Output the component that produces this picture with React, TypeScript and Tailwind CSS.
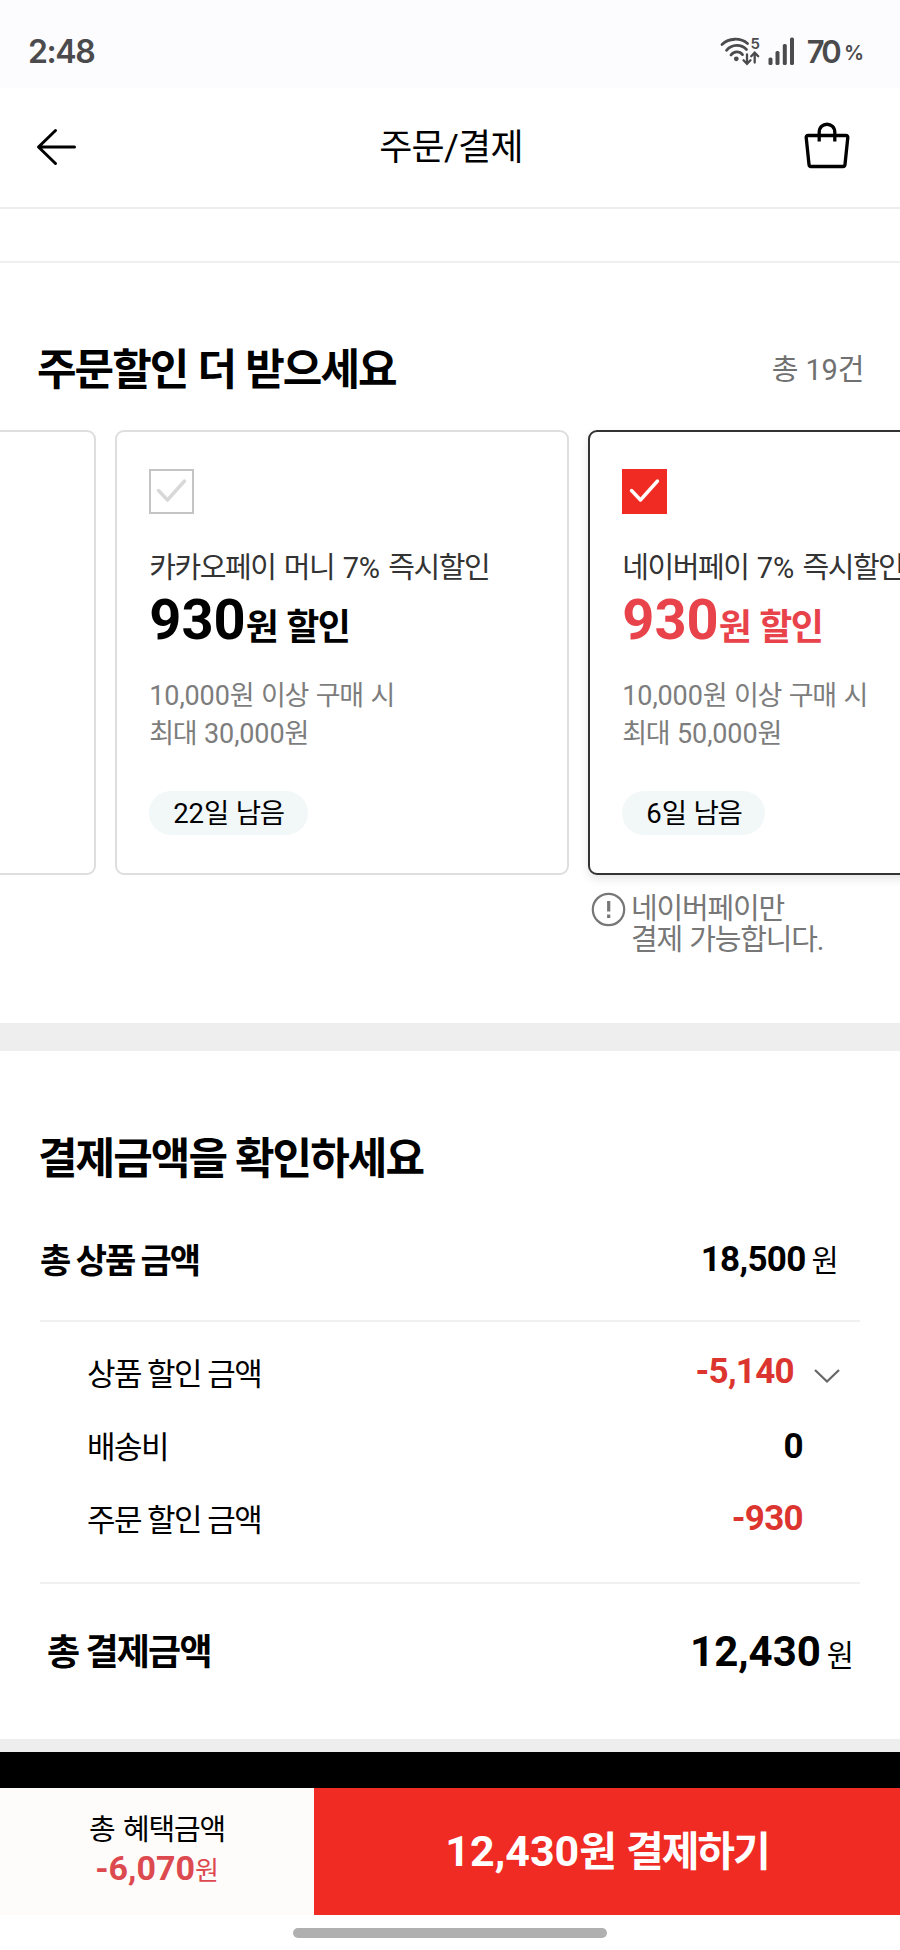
import clsx from 'clsx';

const coupons = [
  {
    name: '카카오페이 머니 7% 즉시할인',
    price: '930',
    limit: '최대 30,000원',
    left: '22일 남음',
    checked: false,
  },
  {
    name: '네이버페이 7% 즉시할인',
    price: '930',
    limit: '최대 50,000원',
    left: '6일 남음',
    checked: true,
  },
];

// hangul is set tight, digits keep their normal spacing
const Ko = ({ children }: { children: string }) => (
  <>
    {children.split(/([0-9,%]+)/).map((part, i) =>
      i % 2 ? (
        <span key={i} className="tracking-[-0.005em]">
          {part}
        </span>
      ) : (
        <span key={i} className="tracking-[-0.05em] [word-spacing:0.09em]">
          {part}
        </span>
      )
    )}
  </>
);

const StatusBar = () => (
  <div className="flex h-[88px] items-center justify-between bg-[#fcfcff] pt-[14px] pr-[36px] pl-[28px] font-['Inter',sans-serif] text-[#4b4b4d]">
    <span className="mt-px text-[32px] leading-none font-semibold tracking-[-0.045em]">2:48</span>
    <div className="flex items-center">
      <svg className="overflow-visible" width="40" height="30" viewBox="0 0 40 30" fill="none" stroke="#4b4b4d" strokeWidth="2.8" strokeLinecap="round">
        <path d="M2 8.5C9 1.8 20.5 1.5 27.5 7.5" />
        <path d="M6.5 14.3C12 8 21 8 26.500 13.500" />
        <path d="M11 19C14 15 19.500 15 22.500 18.600" />
        <circle cx="16.300" cy="22.800" r="2.400" fill="#4b4b4d" stroke="none" />
        <path d="M27 18.500V27M23.500 24.300L27 27.800L30.500 24.300M34.700 26.500V17M31.200 20.200L34.700 16.700L38.200 20.200" strokeWidth="2.300" />
        <text x="30.500" y="13" fontSize="15" fontWeight="600" fill="#4b4b4d" stroke="none">5</text>
      </svg>
      <svg className="ml-2" width="26" height="30" viewBox="0 0 26 30" fill="#4b4b4d">
        <rect x="0.500" y="21.500" width="4" height="7.500" rx="1.600" />
        <rect x="7.500" y="15" width="4" height="14" rx="1.600" />
        <rect x="14.800" y="8" width="4" height="21" rx="1.600" />
        <rect x="22" y="1.500" width="4" height="27.500" rx="1.600" />
      </svg>
      <span className="ml-[13px] flex items-baseline">
        <span className="text-[31px] leading-none font-semibold tracking-[-0.09em]">70</span>
        <span className="relative -top-[3px] ml-[5px] text-[20px] leading-none font-semibold">%</span>
      </span>
    </div>
  </div>
);

const Header = () => (
  <header className="flex h-[121px] items-center justify-between border-b-2 border-[#eeeeee] pr-[50px] pl-[36px]">
    <svg className="-mt-px" width="42" height="40" viewBox="0 0 42 40" fill="none" stroke="#000" strokeWidth="3" strokeLinecap="round" strokeLinejoin="round">
      <path d="M38.500 20H3M19.500 3.500L2.500 20L19.500 36.500" />
    </svg>
    <h1 className="mt-px ml-[20px] text-[36px] leading-none tracking-[-0.02em]">주문/결제</h1>
    <svg className="-mt-[3px]" width="46" height="48" viewBox="0 0 46 48" fill="none" stroke="#000" strokeWidth="3.300" strokeLinejoin="round">
      <path d="M4 13.500H42Q44 13.500 43.800 15.500L41 42.500Q40.800 44.500 39 44.500H7Q5.200 44.500 5 42.500L2.200 15.500Q2 13.500 4 13.500Z" />
      <path d="M15.200 19.500V10.500C15.200 -0.500 30.800 -0.500 30.800 10.500V19.500" />
    </svg>
  </header>
);

const CheckBox = ({ checked }: { checked: boolean }) => (
  <div
    className={clsx(
      'h-[45px] w-[45px]',
      checked ? 'bg-[#ef2b24] text-white' : 'border-2 border-[#c4c4c4] text-[#d8d8d8]'
    )}
  >
    <svg className={checked ? '' : '-m-[2px]'} width="45" height="45" viewBox="0 0 45 45" fill="none" stroke="currentColor" strokeWidth="3.400" strokeLinecap="round" strokeLinejoin="round">
      <path d="M9.500 21.500L18.500 31L35.500 12" />
    </svg>
  </div>
);

const CouponCard = ({ coupon }: { coupon: (typeof coupons)[number] }) => (
  <div
    className={clsx(
      'h-[445px] w-[454px] shrink-0 rounded-[9px] border-2 pt-[37px] pl-[32.300px] whitespace-nowrap',
      coupon.checked
        ? 'border-[#333333] shadow-[0_4px_10px_rgba(0,0,0,0.1)]'
        : 'border-[#dedede]'
    )}
  >
    <CheckBox checked={coupon.checked} />
    <p className="mt-[34px] text-[29px] leading-[40px] text-[#333333]">
      <Ko>{coupon.name}</Ko>
    </p>
    <p className={clsx('text-[56px] leading-[64px] font-bold', coupon.checked ? 'text-[#e8434b]' : 'text-black')}>
      {coupon.price}
      <span className="relative top-px text-[36px] leading-none tracking-[-0.05em] [word-spacing:0.06em]">원 할인</span>
    </p>
    <p className="mt-[26px] text-[27px] leading-[37.5px] text-[#7d7d7d]">
      <Ko>10,000원 이상 구매 시</Ko>
      <br />
      <Ko>{coupon.limit}</Ko>
    </p>
    <span className="mt-[38px] inline-block h-[44px] rounded-full bg-[#f2f7f8] px-[24px] text-[27.5px] leading-[45px] text-black">
      <Ko>{coupon.left}</Ko>
    </span>
  </div>
);

const DiscountSection = () => (
  <section className="h-[760px] overflow-hidden pt-[75px]">
    <div className="flex h-[64px] items-center justify-between pr-[37px] pl-[37px]">
      <h2 className="text-[43px] leading-none font-bold tracking-[-0.045em] [word-spacing:0.03em]">주문할인 더 받으세요</h2>
      <span className="text-[29px] leading-none text-[#707070]">
        <Ko>총 19건</Ko>
      </span>
    </div>
    <div className="mt-[28px] -ml-[359px] flex gap-[19px]">
      <div className="h-[445px] w-[455px] shrink-0 rounded-[9px] border-2 border-[#dedede]"></div>
      {coupons.map((coupon) => (
        <CouponCard key={coupon.name} coupon={coupon} />
      ))}
    </div>
    <div className="mt-[17px] ml-[591px] flex text-[#777777]">
      <svg width="35" height="35" viewBox="0 0 35 35" fill="none" stroke="#777" strokeWidth="2.200">
        <circle cx="17.500" cy="17.500" r="15.700" />
        <path d="M17.700 9V19.500M17.700 22.500V26" strokeWidth="3.200" />
      </svg>
      <p className="mt-[2px] ml-[5px] text-[29px] leading-[31px] tracking-[-0.04em] [word-spacing:0.04em]">
        네이버페이만
        <br />
        결제 가능합니다.
      </p>
    </div>
  </section>
);

const AmountSection = () => (
  <section className="h-[688px] pr-[40px] pl-[40px]">
    <h2 className="-ml-[2px] pt-[76px] text-[43px] leading-[64px] font-bold tracking-[-0.045em]">결제금액을 확인하세요</h2>
    <div className="mt-[36px] flex h-[66px] items-center justify-between pr-[22px]">
      <span className="mt-[2px] text-[34px] font-bold tracking-[-0.06em]">총 상품 금액</span>
      <span className="text-[35px] font-bold tracking-[-0.02em]">
        18,500<span className="ml-[6px] text-[29.5px] font-normal">원</span>
      </span>
    </div>
    <div className="mt-[27px] border-y-2 border-[#f0f0f0] pt-[14px] pb-[27px] pl-[47px]">
      <div className="flex h-[73px] items-center justify-between pr-[19px]">
        <span className="mt-[5px] text-[31px] tracking-[-0.05em]">상품 할인 금액</span>
        <span className="flex items-center text-[35px] font-bold tracking-[-0.02em] text-[#dc352f]">
          -5,140
          <svg className="mt-[7px] ml-[19px]" width="28" height="18" viewBox="0 0 28 18" fill="none" stroke="#666" strokeWidth="2.200">
            <path d="M2 3L14 14.500L26 3" />
          </svg>
        </span>
      </div>
      <div className="flex h-[73px] items-center justify-between pr-[57px]">
        <span className="mt-[6px] text-[31px] tracking-[-0.05em]">배송비</span>
        <span className="mt-[3px] text-[35px] font-bold tracking-[-0.02em]">0</span>
      </div>
      <div className="flex h-[73px] items-center justify-between pr-[57px]">
        <span className="mt-[5px] text-[31px] tracking-[-0.05em]">주문 할인 금액</span>
        <span className="mt-[2px] text-[35px] font-bold tracking-[-0.02em] text-[#dc352f]">-930</span>
      </div>
    </div>
    <div className="mt-[34px] flex h-[66px] items-center justify-between pr-[6px] pl-[7px]">
      <span className="mt-[3px] text-[36px] font-bold tracking-[-0.05em]">총 결제금액</span>
      <span className="text-[42px] font-bold">
        12,430<span className="ml-[6px] text-[29.5px] font-normal">원</span>
      </span>
    </div>
  </section>
);

const BottomBar = () => (
  <div className="flex h-[127px]">
    <div className="w-[314px] bg-[#fdfcfb] pt-[22px] text-center">
      <p className="text-[29px] leading-[40px] tracking-[-0.04em] [word-spacing:0.08em]">총 혜택금액</p>
      <p className="-mt-[2px] text-[34px] leading-[40px] font-bold text-[#dc4a50]">
        -6,070<span className="text-[26px] font-normal">원</span>
      </p>
    </div>
    <button className="flex-1 bg-[#ef2b24] text-[43px] leading-none font-bold text-white">
      12,430<span className="text-[41px] tracking-[-0.05em] [word-spacing:0.07em]">원 결제하기</span>
    </button>
  </div>
);

const App = () => {
  return (
    <main className="h-[1950px] w-[900px] overflow-hidden bg-white font-['Roboto','Noto_Sans_CJK_KR',sans-serif] text-black">
      <StatusBar />
      <Header />
      <div className="h-[54px] border-b-2 border-[#efefef]"></div>
      <DiscountSection />
      <div className="h-[28px] bg-[#eeeeee]"></div>
      <AmountSection />
      <div className="h-[13px] bg-[#eeeeee]"></div>
      <div className="h-[36px] bg-black"></div>
      <BottomBar />
      <div className="mx-auto mt-[13px] h-[10px] w-[314px] rounded-full bg-[#b0b0b0]"></div>
    </main>
  );
};

export default App;
